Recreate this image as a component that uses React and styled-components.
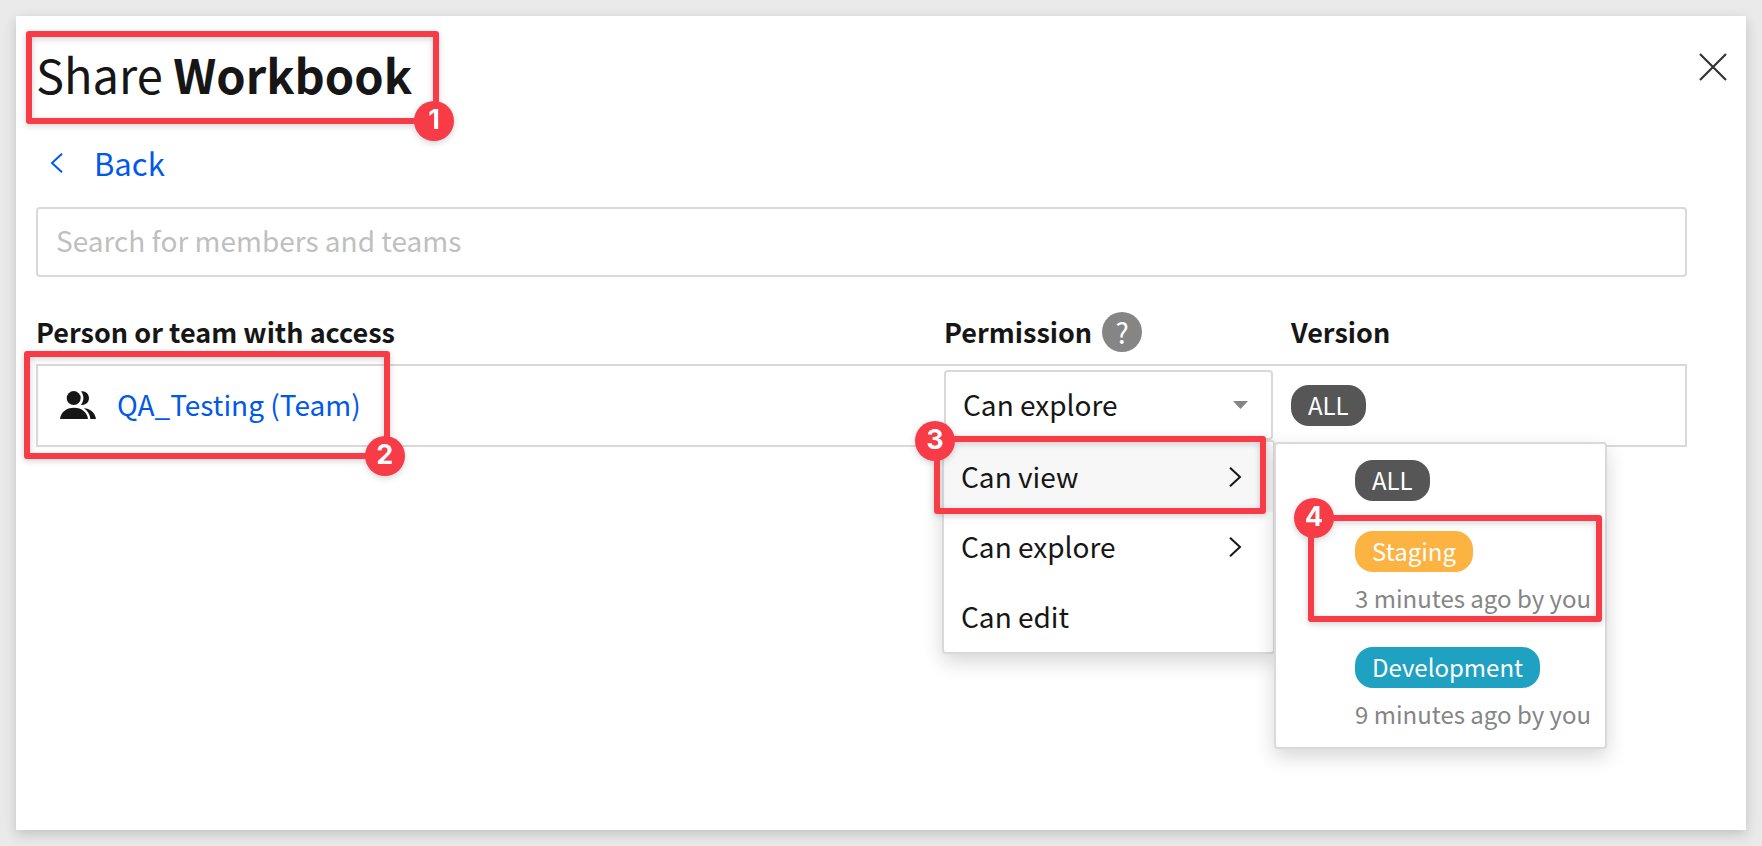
import React from "react";
import styled, { createGlobalStyle } from "styled-components";

const GlobalStyle = createGlobalStyle`
  *, *::before, *::after { box-sizing: border-box; }
  body {
    margin: 0;
    background: #eaeaea;
    color: #161616;
    font-family: "Noto Sans CJK SC", "Noto Sans", sans-serif;
    font-size: 28px;
  }
  button, input, select { font: inherit; color: inherit; }
`;

const Dialog = styled.main`
  margin: 16px;
  padding: 30px 19px 30px 20px;
  min-height: calc(100vh - 32px);
  background: #fff;
  box-shadow: 0 4px 12px rgba(0, 0, 0, 0.18);
`;

const Header = styled.header`
  display: flex;
  justify-content: space-between;
  align-items: flex-start;
  margin-bottom: 41px;
`;

const Marked = styled.div`
  position: relative;
  width: fit-content;
`;

const Title = styled.h1`
  margin: 0;
  font-size: 47px;
  line-height: 56px;
  font-weight: 400;
`;

const CloseButton = styled.button`
  display: flex;
  align-items: center;
  justify-content: center;
  width: 28px;
  height: 42px;
  padding: 0;
  border: 0;
  background: none;
`;

const Body = styled.div`
  margin-right: 40px;
`;

const BackLink = styled.a`
  display: flex;
  align-items: center;
  gap: 31px;
  width: fit-content;
  padding-left: 14px;
  margin-bottom: 24px;
  font-size: 31px;
  line-height: 40px;
  color: #0059eb;
  text-decoration: none;
`;

const SearchInput = styled.input`
  display: block;
  width: 100%;
  height: 70px;
  padding: 0 18px 4px;
  margin-bottom: 35px;
  border: 2px solid #d9d9d9;
  border-radius: 4px;
  background: #fff;
  &::placeholder { color: #bfbfbf; opacity: 1; }
`;

const AccessTable = styled.table`
  width: 100%;
  table-layout: fixed;
  border-collapse: separate;
  border-spacing: 0;
`;

const HeadCell = styled.th`
  width: ${(p) => p.$width || "auto"};
  padding: 0 0 12px;
  text-align: left;
  font-size: 27px;
  font-weight: 700;
  line-height: 40px;
`;

const HeadLabel = styled.div`
  display: flex;
  align-items: center;
  gap: 10px;
  height: 40px;
`;

const HelpButton = styled.button`
  width: 40px;
  height: 40px;
  padding: 0;
  border: 0;
  border-radius: 50%;
  background: #858585;
  color: #fff;
  font-size: 28px;
  font-weight: 400;
  line-height: 40px;
`;

const Cell = styled.td`
  padding: 4px 0 5px;
  border: solid #d9d9d9;
  border-width: 2px 0;
  &:first-child { border-left-width: 2px; }
  &:last-child { border-right-width: 2px; }
`;

const Member = styled.div`
  display: flex;
  align-items: center;
  gap: 21px;
  padding-left: 22px;
`;

const MemberLink = styled.a`
  color: #0059eb;
  line-height: 38px;
  padding-bottom: 2px;
  text-decoration: none;
`;

const SelectBox = styled.div`
  position: relative;
  width: 329px;
`;

const Select = styled.select`
  display: block;
  width: 100%;
  height: 70px;
  padding: 0 17px 2px;
  border: 2px solid #d9d9d9;
  border-radius: 4px;
  background: #fff;
  appearance: none;
`;

const SelectArrow = styled.svg`
  position: absolute;
  right: 25px;
  top: 31px;
  pointer-events: none;
`;

const Popup = styled.div`
  position: absolute;
  border: 2px solid #d9d9d9;
  border-radius: 4px;
  background: #fff;
  box-shadow: 0 8px 20px rgba(0, 0, 0, 0.16);
`;

const PermissionMenu = styled(Popup)`
  left: -2px;
  top: 70px;
  width: 333px;
`;

const VersionMenu = styled(Popup)`
  left: 330px;
  top: 0;
  width: 333px;
`;

const MenuItem = styled.button`
  display: flex;
  align-items: center;
  justify-content: space-between;
  width: 100%;
  height: 70px;
  padding: 0 31px 2px 17px;
  border: 0;
  background: ${(p) => (p.$active ? "#f7f7f7" : "none")};
  text-align: left;
  svg { margin-top: 2px; }
`;

const VersionItem = styled.button`
  display: flex;
  flex-direction: column;
  align-items: flex-start;
  gap: 5px;
  width: 100%;
  padding: 16px 0 13px 79px;
  border: 0;
  background: none;
  &:first-child { padding-bottom: 14px; }
`;

const pillColors = { all: "#565656", staging: "#fdb342", development: "#1fa1c2" };

const Pill = styled.span`
  display: inline-block;
  height: 41px;
  padding: 0 17px;
  border-radius: 18px;
  background: ${(p) => pillColors[p.$tone]};
  color: #fff;
  font-size: 24px;
  line-height: 39px;
`;

const PillSlot = styled.div`
  display: flex;
`;

const EditedAt = styled.span`
  color: #858585;
  font-size: 24px;
  line-height: 41px;
  white-space: nowrap;
`;

const Highlight = styled.span`
  position: absolute;
  inset: ${(p) => p.$inset};
  border: 6px solid #f73c48;
  border-radius: 3px;
  filter: drop-shadow(0 2px 3px rgba(0, 0, 0, 0.18));
  pointer-events: none;
`;

const Badge = styled.span`
  position: absolute;
  inset: ${(p) => p.$inset};
  width: 40px;
  height: 40px;
  border-radius: 50%;
  background: #f73c48;
  color: #fff;
  font-family: Inter, sans-serif;
  font-size: 27px;
  font-weight: 700;
  line-height: 38px;
  text-align: center;
`;

function Step({ number, inset, badge = "auto -21px -23px auto" }) {
  return (
    <Highlight $inset={inset}>
      <Badge $inset={badge}>{number}</Badge>
    </Highlight>
  );
}

function Chevron({ left }) {
  return (
    <svg width="13" height="20" viewBox="0 0 13 20" fill="none" stroke="currentColor" strokeWidth="2" aria-hidden="true">
      <path d={left ? "M12 .8 2 10l10 9.200" : "M1 .8 11 10 1 19.200"} />
    </svg>
  );
}

function TeamIcon() {
  return (
    <svg width="36" height="28" viewBox="0 0 36 28" fill="#161616" aria-hidden="true">
      <circle cx="13.700" cy="7.100" r="7" />
      <path d="M21 .3C25.500-.4 29 2.800 29 7.100s-3.500 7.500-8 6.800c3.200-4 3.200-9.600 0-13.600z" />
      <path d="M0 28c.8-6.500 6-11.200 14-11.200S27 21.500 28 28z" />
      <path d="M24 17.200c6.800.4 11 4.600 12 10.800h-5.600c-.5-4.600-2.500-8.200-6.400-10.800z" />
    </svg>
  );
}

export default function App() {
  return (
    <>
      <GlobalStyle />
      <Dialog>
        <Header>
          <Marked>
            <Title>Share <b>Workbook</b></Title>
            <Step number={1} inset="-15px -27px -22px -10px" />
          </Marked>
          <CloseButton aria-label="Close">
            <svg width="28" height="28" viewBox="0 0 28 28" stroke="#333" strokeWidth="2.200" aria-hidden="true">
              <path d="M1 1l26 26M27 1L1 27" />
            </svg>
          </CloseButton>
        </Header>
        <Body>
          <BackLink href="#back"><Chevron left />Back</BackLink>
          <SearchInput type="search" aria-label="Search for members and teams" placeholder="Search for members and teams" />
          <AccessTable>
            <thead>
              <tr>
                <HeadCell scope="col">Person or team with access</HeadCell>
                <HeadCell scope="col" $width="347px">
                  <HeadLabel>Permission <HelpButton aria-label="About permissions">?</HelpButton></HeadLabel>
                </HeadCell>
                <HeadCell scope="col" $width="396px">Version</HeadCell>
              </tr>
            </thead>
            <tbody>
              <tr>
                <Cell>
                  <Marked>
                    <Member>
                      <TeamIcon />
                      <MemberLink href="#team">QA_Testing (Team)</MemberLink>
                    </Member>
                    <Step number={2} inset="-34px -29px -34px -14px" />
                  </Marked>
                </Cell>
                <Cell>
                  <SelectBox>
                    <Select aria-label="Permission" defaultValue="explore">
                      <option value="view">Can view</option>
                      <option value="explore">Can explore</option>
                      <option value="edit">Can edit</option>
                    </Select>
                    <SelectArrow width="15" height="8" viewBox="0 0 15 8" aria-hidden="true">
                      <path d="M0 0h15L7.500 8z" fill="#858585" />
                    </SelectArrow>
                    <PermissionMenu>
                      <MenuItem $active>Can view<Chevron /></MenuItem>
                      <MenuItem>Can explore<Chevron /></MenuItem>
                      <MenuItem>Can edit</MenuItem>
                      <VersionMenu>
                        <VersionItem><Pill $tone="all">ALL</Pill></VersionItem>
                        <VersionItem>
                          <Pill $tone="staging">Staging</Pill>
                          <EditedAt>3 minutes ago by you</EditedAt>
                        </VersionItem>
                        <VersionItem>
                          <Pill $tone="development">Development</Pill>
                          <EditedAt>9 minutes ago by you</EditedAt>
                        </VersionItem>
                        <Step number={4} inset="71px 3px 125px 32px" badge="-23px auto auto -20px" />
                      </VersionMenu>
                      <Step number={3} inset="-6px 7px 138px -10px" badge="-21px auto auto -25px" />
                    </PermissionMenu>
                  </SelectBox>
                </Cell>
                <Cell>
                  <PillSlot><Pill $tone="all">ALL</Pill></PillSlot>
                </Cell>
              </tr>
            </tbody>
          </AccessTable>
        </Body>
      </Dialog>
    </>
  );
}
